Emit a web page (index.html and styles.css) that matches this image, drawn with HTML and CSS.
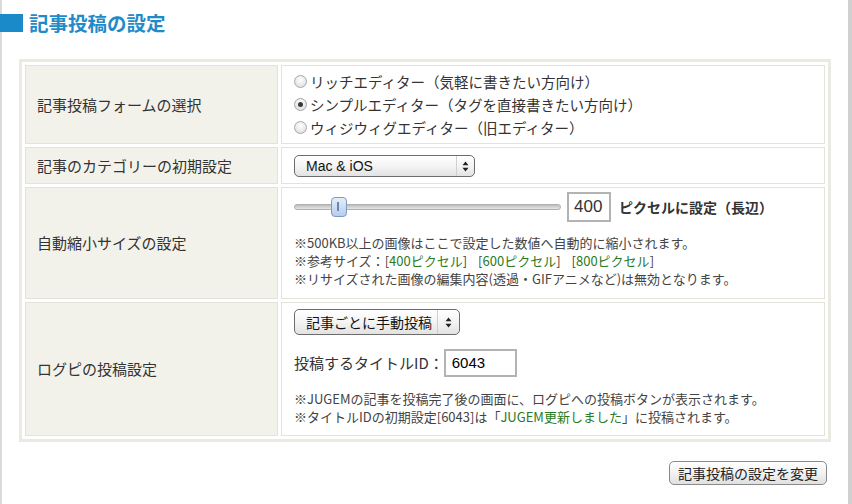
FILE: index.html
```html
<!DOCTYPE html>
<html lang="ja">
  <head>
    <meta charset="UTF-8" />
    <meta name="viewport" content="width=device-width, initial-scale=1.0" />
    <title>記事投稿の設定</title>
    <link rel="stylesheet" href="styles.css">
  </head>
  <body>
    <div class="page">
      <h1 class="title"><span class="title-mark"></span>記事投稿の設定</h1>

      <table class="settings">
        <tr class="row-editor">
          <th>記事投稿フォームの選択</th>
          <td>
            <label class="radio-line"><span class="radio"></span>リッチエディター（気軽に書きたい方向け）</label>
            <label class="radio-line"><span class="radio checked"></span>シンプルエディター（タグを直接書きたい方向け）</label>
            <label class="radio-line"><span class="radio"></span>ウィジウィグエディター（旧エディター）</label>
          </td>
        </tr>
        <tr class="row-category">
          <th>記事のカテゴリーの初期設定</th>
          <td>
            <span class="select select-category">
              <span class="select-text latin">Mac &amp; iOS</span>
              <span class="select-arrow">
                <svg width="7" height="11" viewBox="0 0 7 11"><path d="M3.5 0.5 L6.5 4.3 L0.5 4.3 Z M3.5 10.5 L6.5 6.7 L0.5 6.7 Z" fill="#222"/></svg>
              </span>
            </span>
          </td>
        </tr>
        <tr class="row-resize">
          <th>自動縮小サイズの設定</th>
          <td>
            <div class="resize-line">
              <div class="slider">
                <span class="slider-track"></span>
                <span class="slider-thumb"></span>
              </div>
              <span class="text-box size-box">400</span>
              <strong class="size-unit">ピクセルに設定（長辺）</strong>
            </div>
            <p class="note">
              ※500KB以上の画像はここで設定した数値へ自動的に縮小されます。<br>
              ※参考サイズ：<span class="ref">[<a href="#">400ピクセル</a>]</span><span class="ref">[<a href="#">600ピクセル</a>]</span><span class="ref">[<a href="#">800ピクセル</a>]</span><br>
              ※リサイズされた画像の編集内容(透過・GIFアニメなど)は無効となります。
            </p>
          </td>
        </tr>
        <tr class="row-logpi">
          <th>ログピの投稿設定</th>
          <td>
            <span class="select select-logpi">
              <span class="select-text">記事ごとに手動投稿</span>
              <span class="select-arrow">
                <svg width="7" height="11" viewBox="0 0 7 11"><path d="M3.5 0.5 L6.5 4.3 L0.5 4.3 Z M3.5 10.5 L6.5 6.7 L0.5 6.7 Z" fill="#222"/></svg>
              </span>
            </span>
            <div class="title-id">
              投稿するタイトルID：<span class="text-box id-box">6043</span>
            </div>
            <p class="note">
              ※JUGEMの記事を投稿完了後の画面に、ログピへの投稿ボタンが表示されます。<br>
              ※タイトルIDの初期設定[6043]は「<a href="#">JUGEM更新しました</a>」に投稿されます。
            </p>
          </td>
        </tr>
      </table>

      <div class="actions">
        <button class="submit">記事投稿の設定を変更</button>
      </div>
    </div>
  </body>
</html>
```

FILE: styles.css
```css
body {
  margin: 0;
  background: #fff;
  font-family: "Noto Sans CJK JP", "Liberation Sans", sans-serif;
  color: #333;
}
.page {
  height: 504px;
  box-sizing: border-box;
  border-left: 2px solid #dadada;
  border-right: 4px solid #d0d0d0;
}
.title {
  display: flex;
  align-items: center;
  gap: 6px;
  margin: 0 0 0 -2px;
  padding-top: 12px;
  height: 22px;
  font-size: 19.5px;
  line-height: 22px;
  font-weight: bold;
  color: #1f8bc8;
}
.title-mark {
  width: 23px;
  height: 18px;
  background: #1a8ac9;
}
.settings {
  margin: 25px 0 0 17px;
  width: 812px;
  border: 3px solid #ebeae2;
  border-spacing: 3px;
}
.settings th,
.settings td {
  border: 1px solid #e4e3da;
  line-height: 20px;
}
.settings th {
  width: 230px;
  padding: 0 10px 0 11px;
  background: #f3f2ea;
  font-size: 15px;
  font-weight: normal;
  text-align: left;
  vertical-align: middle;
  color: #333;
}
.settings td {
  padding: 0 12px;
  vertical-align: top;
}
.row-editor { height: 79px; }
.row-category { height: 37px; }
.row-resize { height: 112px; }
.row-logpi { height: 134px; }

.row-editor td {
  padding-top: 4px;
}
.radio-line {
  display: flex;
  align-items: center;
  height: 23px;
  font-size: 14.5px;
  color: #333;
}
.radio {
  width: 11px;
  height: 11px;
  margin-right: 3px;
  border: 1px solid #a8a8a8;
  border-radius: 50%;
  background: radial-gradient(circle at 50% 35%, #fff, #d8d8d8);
  display: flex;
  align-items: center;
  justify-content: center;
}
.radio.checked::after {
  content: "";
  width: 5px;
  height: 5px;
  border-radius: 50%;
  background: #3a3a3a;
}

.row-category td {
  vertical-align: middle;
}
.select {
  display: inline-flex;
  align-items: stretch;
  box-sizing: border-box;
  border: 1px solid #6c6c6c;
  border-radius: 5px;
  background: linear-gradient(#ffffff, #f4f4f4 50%, #e2e2e2);
  color: #111;
  vertical-align: middle;
}
.select-text {
  flex: 1;
  display: flex;
  align-items: center;
  padding-left: 11px;
  font-size: 14px;
}
.select-text.latin {
  font-family: "Liberation Sans", sans-serif;
}
.select-arrow {
  display: flex;
  align-items: center;
  justify-content: center;
  border-left: 1px solid #cfcfcf;
}
.select-category {
  width: 181px;
  height: 22px;
}
.select-category .select-arrow {
  width: 17px;
}
.select-logpi {
  width: 166px;
  height: 26px;
  margin-top: 6px;
}
.select-logpi .select-arrow {
  width: 21px;
}

.row-resize td {
  padding-top: 4px;
}
.resize-line {
  display: flex;
  align-items: center;
  height: 30px;
}
.slider {
  position: relative;
  width: 267px;
  height: 20px;
}
.slider-track {
  position: absolute;
  left: 0;
  right: 0;
  top: 7px;
  height: 4px;
  border: 1px solid #b0b0b0;
  border-radius: 3px;
  background: linear-gradient(#bdbdbd, #e6e6e6);
}
.slider-thumb {
  position: absolute;
  left: 37px;
  top: 0;
  width: 14px;
  height: 18px;
  border: 1px solid #7f99c2;
  border-radius: 4px;
  background: linear-gradient(#e4eefa, #b5cdee);
}
.slider-thumb::after {
  content: "";
  position: absolute;
  left: 5px;
  top: 4px;
  width: 2px;
  height: 9px;
  border-left: 1px solid #6d86ad;
  border-right: 1px solid #6d86ad;
  box-sizing: border-box;
}
.text-box {
  display: inline-flex;
  align-items: center;
  box-sizing: border-box;
  border: 2px solid #b3b3b3;
  background: #fff;
  font-family: "Liberation Sans", sans-serif;
}
.size-box {
  width: 44px;
  height: 30px;
  margin-left: 6px;
  padding-left: 5px;
  font-size: 17px;
  color: #333;
}
.size-unit {
  margin-left: 8px;
  font-size: 14px;
  color: #333;
}
.note {
  margin: 12px 0 0;
  font-size: 13px;
  line-height: 18px;
  color: #444;
}
.note a {
  color: #2a7a22;
  text-decoration: none;
}
.ref {
  margin-right: 11px;
}

.row-logpi .note {
  margin-top: 14px;
}
.title-id {
  display: flex;
  align-items: center;
  margin-top: 14px;
  height: 27px;
  font-size: 15px;
  color: #333;
}
.id-box {
  width: 73px;
  height: 28px;
  padding-left: 6px;
  font-size: 15px;
  color: #000;
}

.actions {
  display: flex;
  justify-content: flex-end;
  margin-top: 19px;
  padding-right: 21px;
}
.submit {
  width: 158px;
  height: 24px;
  padding: 0;
  border: 1px solid #8a8a8a;
  border-radius: 5px;
  background: linear-gradient(#ffffff, #f2f2f2 50%, #e0e0e0);
  font-family: "Noto Sans CJK JP", sans-serif;
  font-size: 14px;
  color: #222;
}
```
